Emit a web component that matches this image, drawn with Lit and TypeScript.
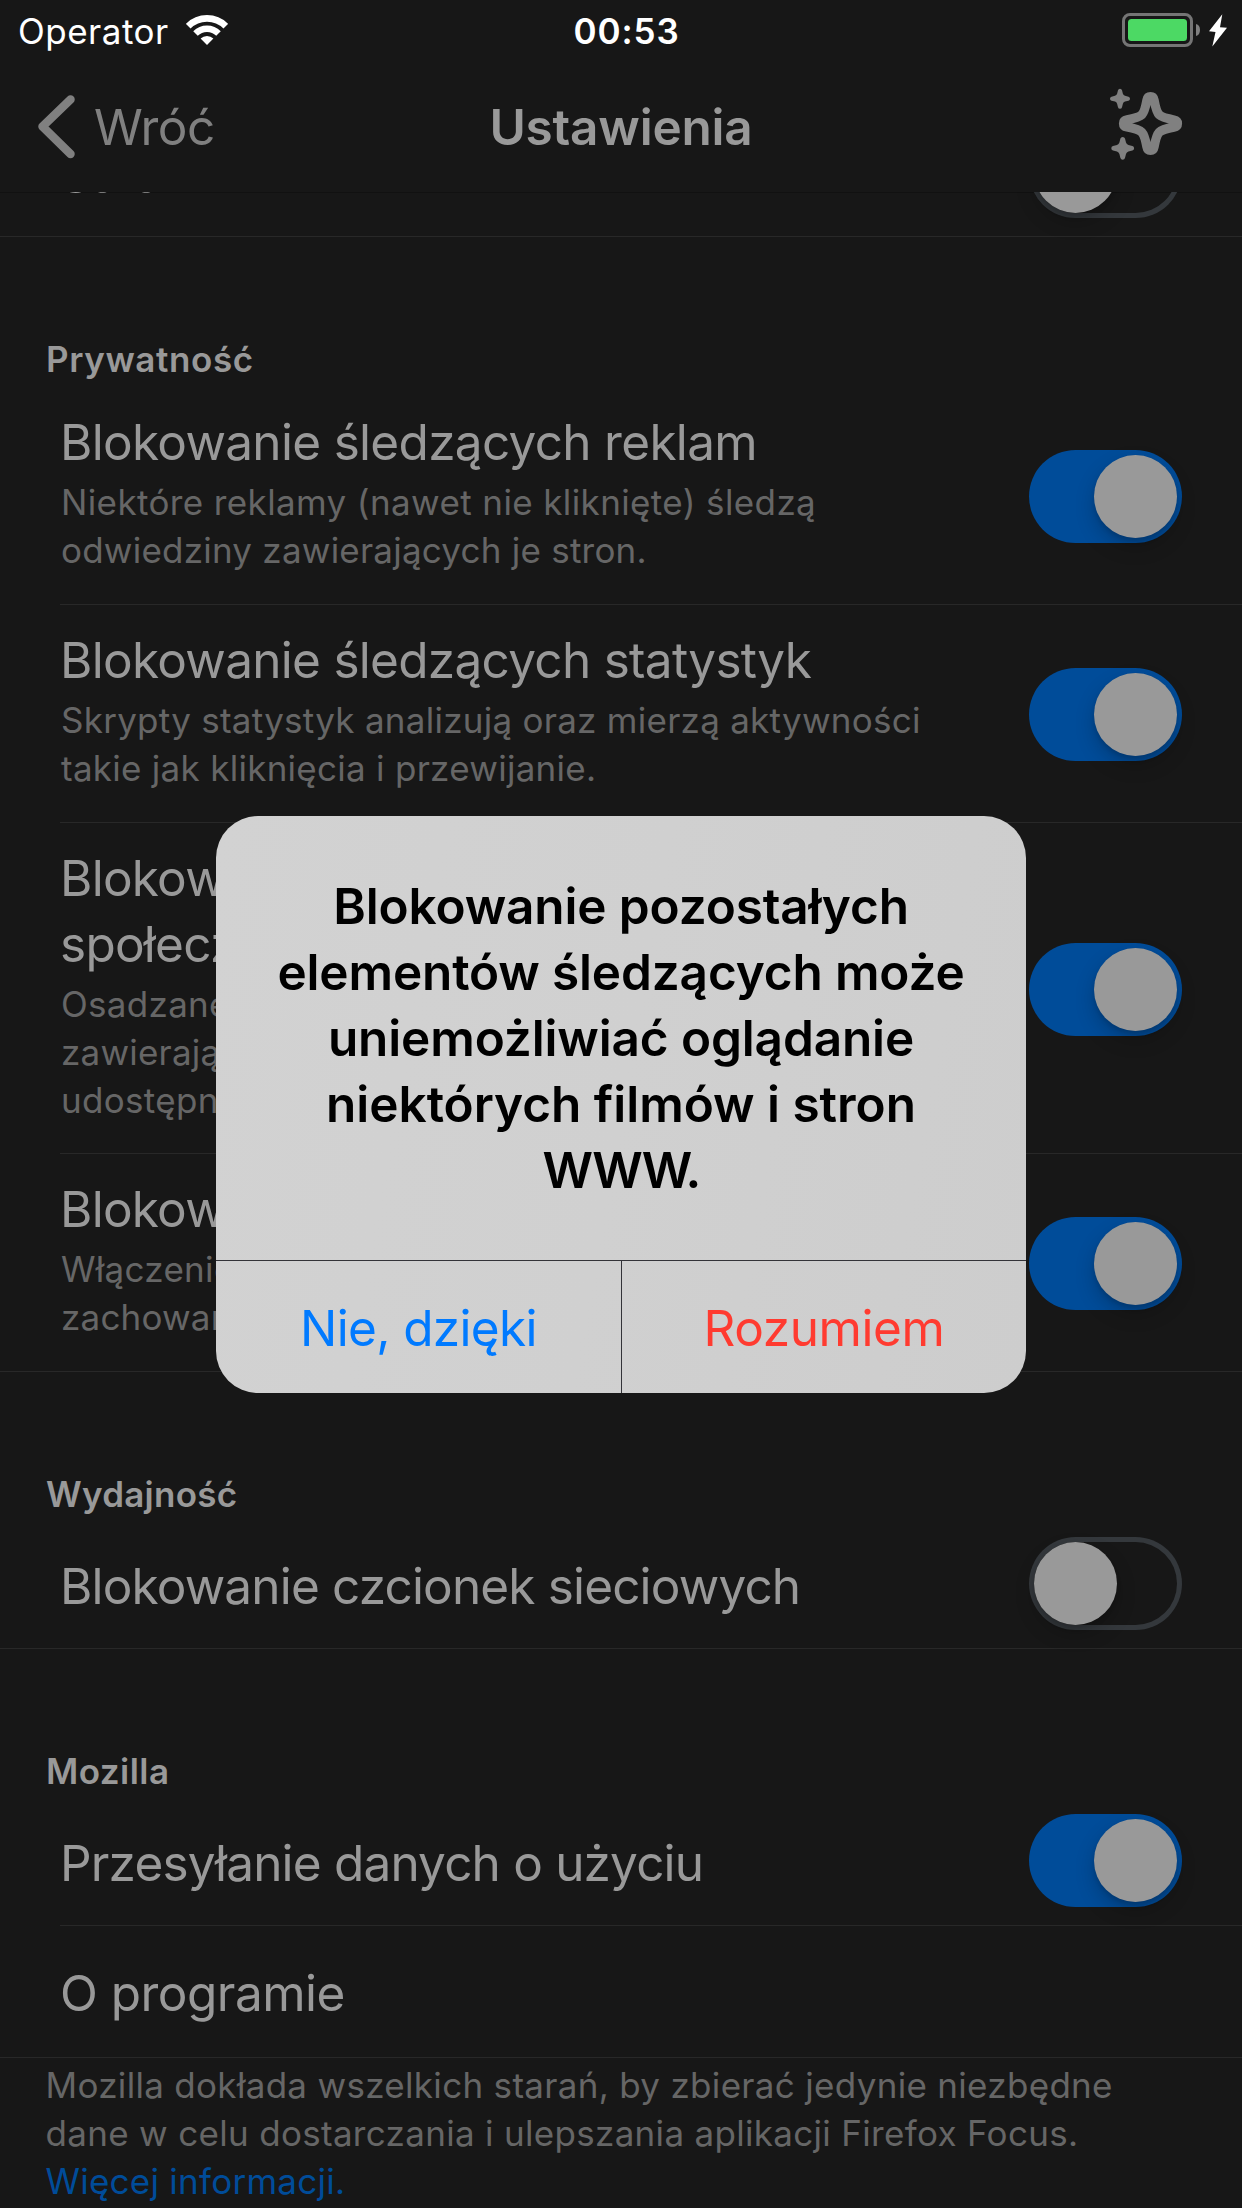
import { LitElement, html, css, svg, nothing } from "lit";
import { customElement, property } from "lit/decorators.js";
import { classMap } from "lit/directives/class-map.js";

/** One line of text and its tracking in pixels. */
type Line = [text: string, tracking: number];

interface Row {
  title: Line[];
  detail?: Line[];
  on?: boolean;
}

interface Section {
  header?: Line;
  rows: Row[];
}

const sections: Section[] = [
  { rows: [{ title: [["Safari", -0.75]], on: false }] },
  {
    header: ["Prywatność", 0.6],
    rows: [
      {
        title: [["Blokowanie śledzących reklam", -0.69]],
        detail: [
          ["Niektóre reklamy (nawet nie kliknięte) śledzą", 0.38],
          ["odwiedziny zawierających je stron.", 0.225],
        ],
        on: true,
      },
      {
        title: [["Blokowanie śledzących statystyk", -0.71]],
        detail: [
          ["Skrypty statystyk analizują oraz mierzą aktywności", 0.263],
          ["takie jak kliknięcia i przewijanie.", 0.276],
        ],
        on: true,
      },
      {
        title: [
          ["Blokowanie", -0.75],
          ["społecznościowych", -0.75],
        ],
        detail: [
          ["Osadzane", 0.3],
          ["zawierają", 0.2],
          ["udostępnianie", 0.3],
        ],
        on: true,
      },
      {
        title: [["Blokowanie", -0.75]],
        detail: [
          ["Włączenie", 0.3],
          ["zachowanie", 0.2],
        ],
        on: true,
      },
    ],
  },
  {
    header: ["Wydajność", 0.25],
    rows: [{ title: [["Blokowanie czcionek sieciowych", -0.84]], on: false }],
  },
  {
    header: ["Mozilla", 0.45],
    rows: [
      { title: [["Przesyłanie danych o użyciu", -0.815]], on: true },
      { title: [["O programie", -0.52]] },
    ],
  },
];

const footer: Line[] = [
  ["Mozilla dokłada wszelkich starań, by zbierać jedynie niezbędne", 0.31],
  ["dane w celu dostarczania i ulepszania aplikacji Firefox Focus.", 0.31],
];

const alertTitle: Line[] = [
  ["Blokowanie pozostałych", -0.13],
  ["elementów śledzących może", -0.143],
  ["uniemożliwiać oglądanie", -0.128],
  ["niektórych filmów i stron", -0.03],
  ["WWW.", -1.95],
];

const lines = (items: Line[]) =>
  items.map(([text, tracking]) => html`<div style="letter-spacing:${tracking}px">${text}</div>`);

@customElement("ios-switch")
export class IosSwitch extends LitElement {
  @property({ type: Boolean }) on = false;

  static styles = css`
    :host {
      display: block;
      flex: none;
    }
    .track {
      box-sizing: border-box;
      width: 153px;
      height: 93px;
      border-radius: 47px;
      padding: 5px;
      display: flex;
      justify-content: flex-start;
      box-shadow: inset 0 0 0 5px #34383c;
    }
    .track.on {
      justify-content: flex-end;
      background: #004c99;
      box-shadow: none;
    }
    .knob {
      width: 83px;
      height: 83px;
      border-radius: 50%;
      background: #999;
      box-shadow: 0 9px 20px rgba(0, 0, 0, 0.2), 0 3px 4px rgba(0, 0, 0, 0.12);
    }
  `;

  render() {
    return html`<div class=${classMap({ track: true, on: this.on })}><div class="knob"></div></div>`;
  }
}

const smallStar = svg`<path d="M-2,-8.5Q-1.6,-10 0,-10Q1.6,-10 2,-8.5L2.9,-5Q3.4,-3.4 5,-2.9L8.5,-2Q10,-1.6 10,0Q10,1.6 8.5,2L5,2.9Q3.4,3.4 2.9,5L2,8.5Q1.6,10 0,10Q-1.6,10 -2,8.5L-2.9,5Q-3.4,3.4 -5,2.9L-8.5,2Q-10,1.6 -10,0Q-10,-1.6 -8.5,-2L-5,-2.9Q-3.4,-3.4 -2.9,-5Z"/>`;

@customElement("app-root")
export class AppRoot extends LitElement {
  static styles = css`
    :host {
      display: block;
      position: relative;
      width: 1242px;
      height: 2208px;
      overflow: hidden;
      background: #171717;
      color: #999;
      font-family: Inter, "Liberation Sans", sans-serif;
      font-size: 49.5px;
      line-height: 66px;
      white-space: nowrap;
    }
    svg {
      display: block;
      flex: none;
    }
    .screen {
      display: flex;
      flex-direction: column;
      height: 2208px;
    }
    .bar {
      box-sizing: border-box;
      flex: none;
      display: grid;
      grid-template-columns: 1fr auto 1fr;
      align-items: center;
    }
    .status {
      height: 60px;
      padding: 2px 14px 0 18px;
      font-size: 35px;
      line-height: 48px;
      color: #fff;
    }
    .carrier {
      display: flex;
      align-items: center;
      gap: 17px;
      letter-spacing: 0.5px;
    }
    .carrier svg {
      margin-top: -2px;
    }
    .clock {
      font-weight: 600;
      letter-spacing: 0.9px;
      padding-left: 7px;
    }
    .power {
      justify-self: end;
      margin-top: -2px;
    }
    .nav {
      height: 132px;
      padding: 2px 58px 0;
    }
    .back {
      display: flex;
      align-items: center;
      gap: 16px;
      margin-left: -22px;
      color: #808080;
      letter-spacing: -0.53px;
    }
    .heading {
      font-weight: 600;
      letter-spacing: -0.2px;
    }
    .sparkle {
      justify-self: end;
      margin-top: -4px;
    }
    .list {
      flex: 1;
      overflow: hidden;
      box-shadow: inset 0 1px 0 #111;
    }
    .section:first-child {
      margin-top: -82px;
    }
    .header {
      padding: 98px 0 4px 46px;
      font-size: 35px;
      line-height: 48px;
      font-weight: 600;
    }
    .row {
      display: flex;
      align-items: flex-start;
      justify-content: space-between;
      margin-left: 60px;
      padding: 31px 60px 29px 0;
      border-bottom: 1px solid #282828;
    }
    .row.plain {
      padding-top: 34px;
      padding-bottom: 31px;
    }
    .row.detailed {
      padding-top: 22px;
      padding-bottom: 30px;
      align-items: center;
    }
    .row.tall {
      padding-bottom: 29px;
    }
    .row:last-child {
      margin-left: 0;
      padding-left: 60px;
    }
    .row ios-switch {
      margin: -16px 0 -18px;
    }
    .row.detailed ios-switch {
      margin: 10px 0 0;
    }
    .detail {
      padding: 3px 0 0 1px;
      font-size: 35px;
      line-height: 48px;
      color: #666;
    }
    .footer {
      padding: 3px 0 0 45.5px;
      font-size: 35px;
      line-height: 48px;
      color: #666;
    }
    .link {
      color: #004c99;
      letter-spacing: 0.25px;
    }
    .alert {
      position: absolute;
      left: 216px;
      top: 816px;
      width: 810px;
      height: 577px;
      border-radius: 42px;
      overflow: hidden;
      display: flex;
      flex-direction: column;
      background: linear-gradient(100deg, #d2d2d2, #d0d0d0 50%, #cdcdcd);
      text-align: center;
    }
    .message {
      flex: 1;
      padding-top: 57px;
      font-weight: 600;
      color: #000;
    }
    .actions {
      display: grid;
      grid-template-columns: 405px 1px 404px;
      height: 132px;
      border-top: 1px solid #333338;
    }
    .divider {
      background: #333338;
    }
    .action {
      padding-top: 34px;
    }
    .cancel {
      color: #007aff;
      letter-spacing: -0.65px;
    }
    .confirm {
      color: #ff3b30;
      letter-spacing: -0.41px;
    }
  `;

  private renderStatus() {
    return html`<div class="bar status">
      <div class="carrier">
        Operator
        <svg width="42" height="30" viewBox="0 0 42 30" fill="none" stroke="#fff">
          <path stroke-width="6.6" d="M2.2,11.2A26.6,26.6 0 0 1 39.8,11.2" />
          <path stroke-width="6.4" d="M9.5,18.5A16.3,16.3 0 0 1 32.5,18.5" />
          <path fill="#fff" stroke="none" d="M14.6,23.6A9,9 0 0 1 27.4,23.6L21,30Z" />
        </svg>
      </div>
      <div class="clock">00:53</div>
      <svg class="power" width="106" height="34" viewBox="0 0 106 34">
        <rect x="1.5" y="1.5" width="68" height="31" rx="6.5" fill="none" stroke="#757575" stroke-width="3" />
        <rect x="6" y="6" width="59" height="22" rx="3.5" fill="#4cd964" />
        <path fill="#808080" d="M74,11Q78,12 78,17Q78,22 74,23Z" />
        <path fill="#fff" d="M100.3,1.3L87,18.3L93.5,19L90.3,33.5L105,14.8L98,14.3Z" />
      </svg>
    </div>`;
  }

  private renderNav() {
    return html`<div class="bar nav">
      <div class="back">
        <svg width="42" height="66" viewBox="0 0 42 66" fill="none" stroke="#808080">
          <path stroke-width="8.5" stroke-linecap="round" stroke-linejoin="round" d="M34.5,5.5L6.5,32.5L34.5,60" />
        </svg>
        Wróć
      </div>
      <div class="heading">Ustawienia</div>
      <svg class="sparkle" width="76" height="74" viewBox="1108 88 76 74" fill="#808080">
        <path
          transform="translate(1150.5 123.5)"
          fill="none"
          stroke="#808080"
          stroke-width="9.2"
          stroke-linejoin="round"
          d="M-3.6,-23.5Q-3,-27 0,-27Q3,-27 3.6,-23.5C5.3,-14.5 6.6,-10.8 8.7,-8.7C10.8,-6.6 14.5,-5.3 23.5,-3.6Q27,-3 27,0Q27,3 23.5,3.6C14.5,5.3 10.8,6.6 8.7,8.7C6.6,10.8 5.3,14.5 3.6,23.5Q3,27 0,27Q-3,27 -3.6,23.5C-5.3,14.5 -6.6,10.8 -8.7,8.7C-10.8,6.6 -14.5,5.3 -23.5,3.6Q-27,3 -27,0Q-27,-3 -23.5,-3.6C-14.5,-5.3 -10.8,-6.6 -8.7,-8.7C-6.6,-10.8 -5.3,-14.5 -3.6,-23.5Z"
        />
        <g transform="translate(1120 98.7)">${smallStar}</g>
        <g transform="translate(1122.7 148.3) scale(1.14)">${smallStar}</g>
      </svg>
    </div>`;
  }

  private renderRow(row: Row) {
    const classes = {
      row: true,
      detailed: !!row.detail,
      tall: (row.detail?.length ?? 0) > 2,
      plain: row.on === undefined,
    };
    return html`<div class=${classMap(classes)}>
      <div>
        ${lines(row.title)}
        ${row.detail ? html`<div class="detail">${lines(row.detail)}</div>` : nothing}
      </div>
      ${row.on === undefined ? nothing : html`<ios-switch .on=${row.on}></ios-switch>`}
    </div>`;
  }

  render() {
    return html`<div class="screen">
        ${this.renderStatus()} ${this.renderNav()}
        <div class="list">
          ${sections.map(
            (section) => html`<div class="section">
              ${section.header ? html`<div class="header">${lines([section.header])}</div>` : nothing}
              ${section.rows.map((row) => this.renderRow(row))}
            </div>`,
          )}
          <div class="footer">
            ${lines(footer)}
            <div class="link">Więcej informacji.</div>
          </div>
        </div>
      </div>
      <div class="alert">
        <div class="message">${lines(alertTitle)}</div>
        <div class="actions">
          <div class="action cancel">Nie, dzięki</div>
          <div class="divider"></div>
          <div class="action confirm">Rozumiem</div>
        </div>
      </div>`;
  }
}
